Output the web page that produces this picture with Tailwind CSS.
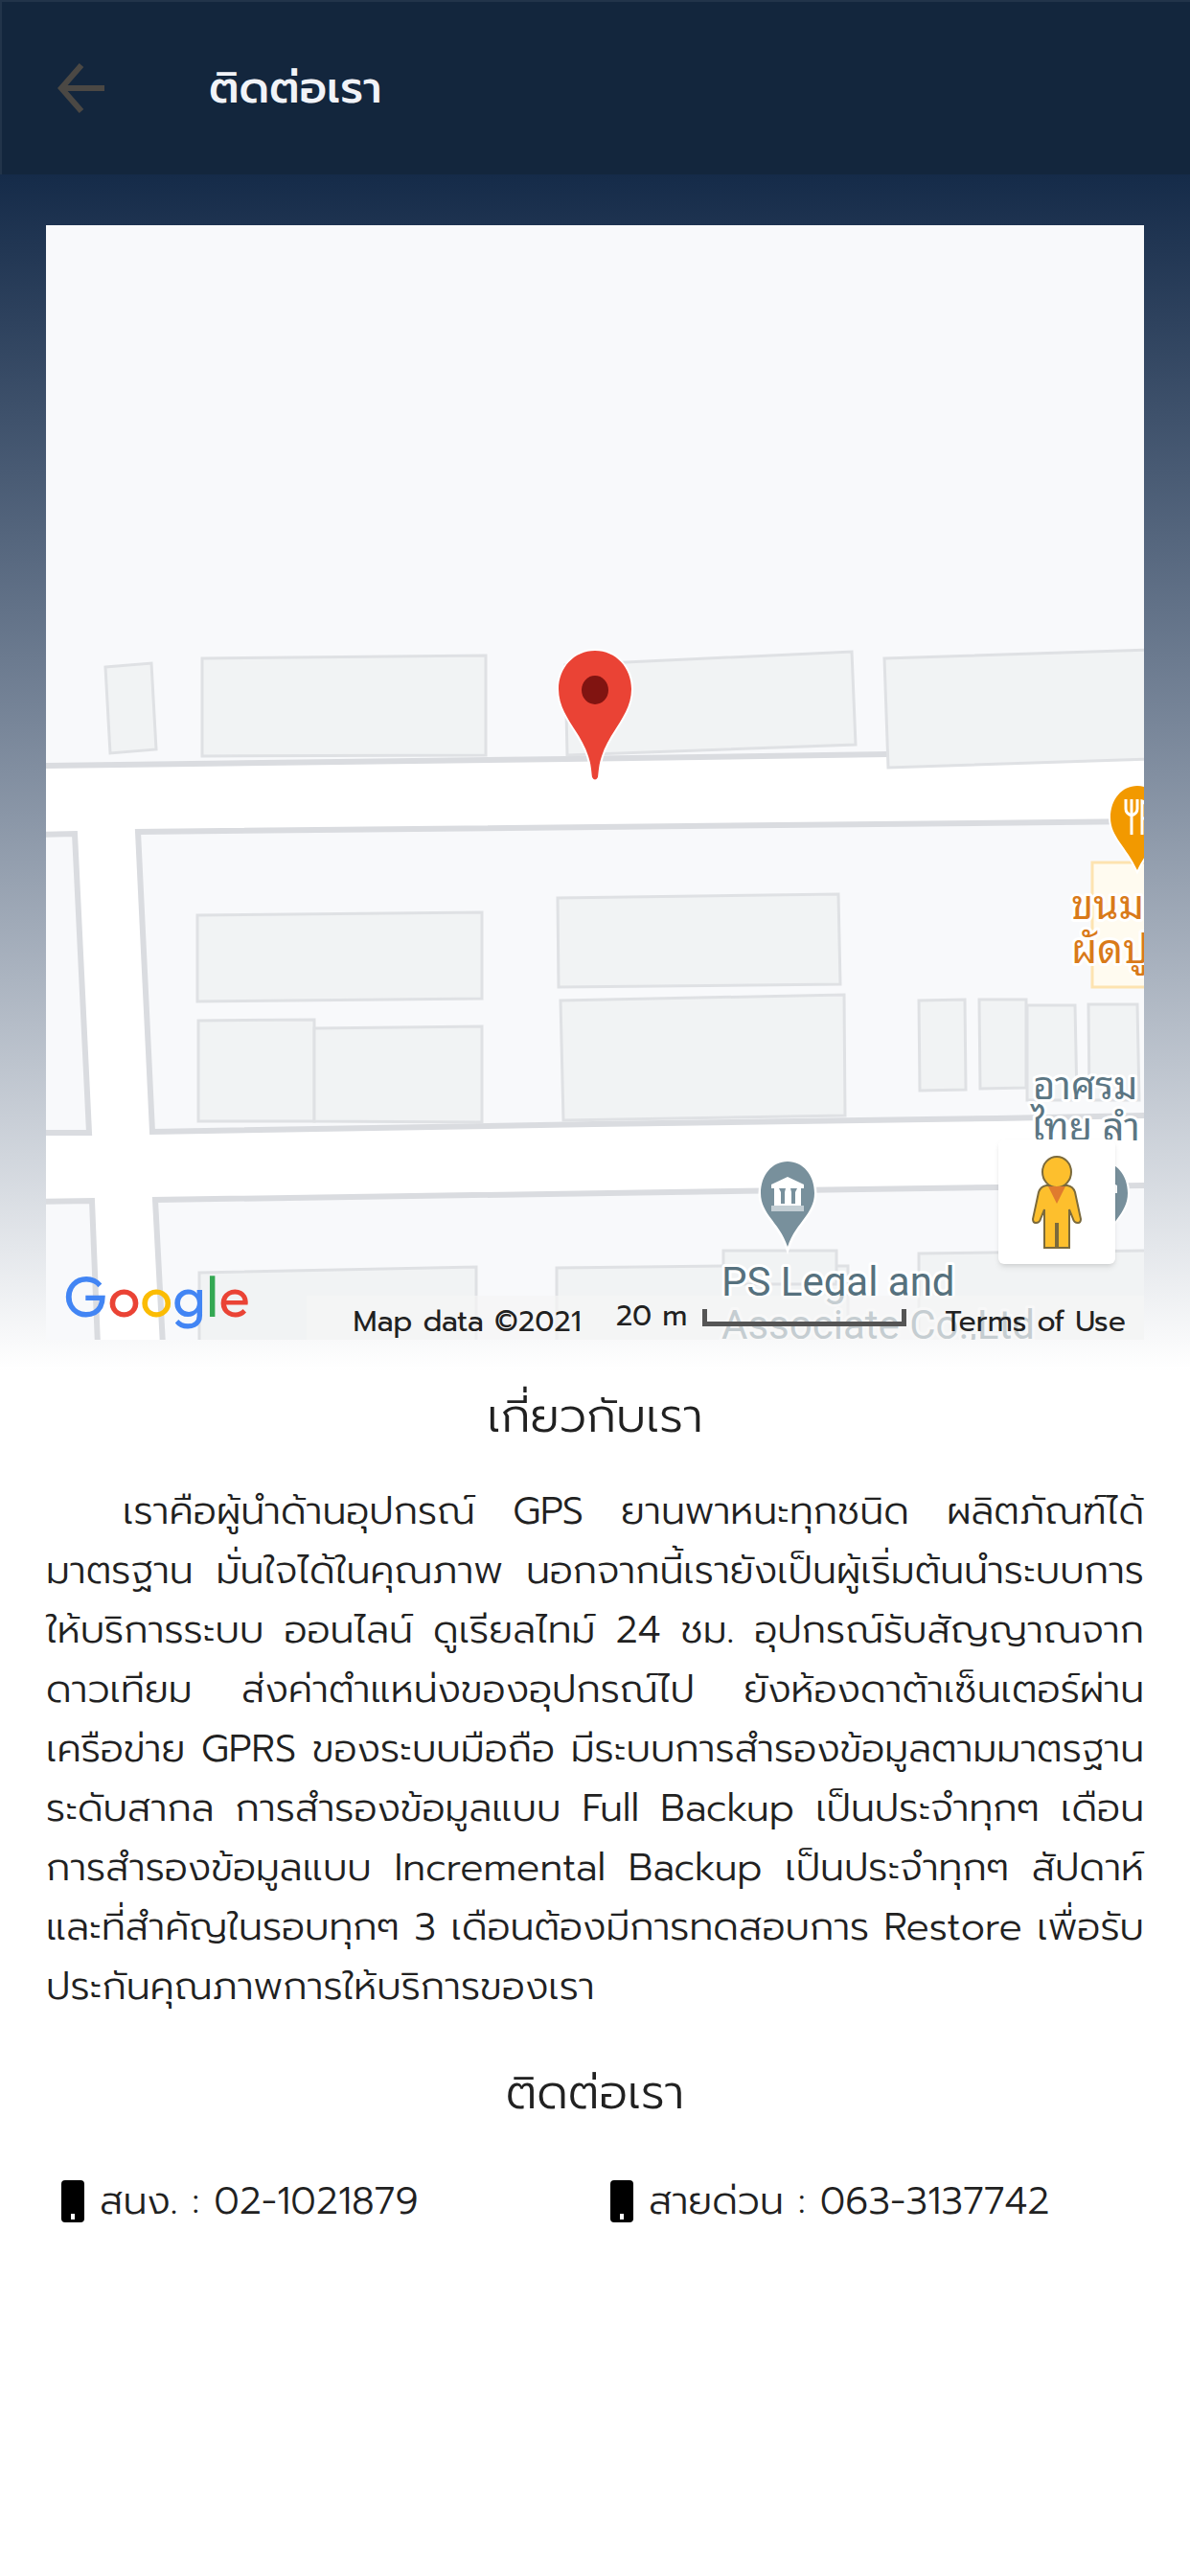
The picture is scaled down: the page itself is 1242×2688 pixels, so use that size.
<!DOCTYPE html>
<html lang="th">
  <head>
    <meta charset="UTF-8" />
    <meta name="viewport" content="width=device-width, initial-scale=1.0" />
    <title>ติดต่อเรา</title>
    <script src="https://cdn.jsdelivr.net/npm/@tailwindcss/browser@4"></script>
  </head>
  <body class="min-h-screen bg-white font-['Prompt','Noto_Sans',sans-serif] text-[#212121]">
    <header class="flex h-[182px] items-center border-t-2 border-l-2 border-[#22344a] bg-[#13263d] pl-14">
      <button type="button" aria-label="ย้อนกลับ" class="text-[#4b4844]">
        <svg class="h-14 w-14" viewBox="0 0 56 56" fill="none" stroke="currentColor" stroke-width="6">
          <path d="M27 4 6 28l21 24M6 28h45" />
        </svg>
      </button>
      <h1 class="ml-26 text-[46px] leading-[56px] font-medium text-[#f1f3f8]">ติดต่อเรา</h1>
    </header>

    <main>
      <section class="bg-linear-to-b from-[#152b49] to-white px-12 pt-[53px] pb-8">
        <div class="relative overflow-hidden bg-[#f8f9fb]">
          <svg class="block w-full" viewBox="48 235 1146 1163">
            <!-- roads -->
            <g fill="#fff" stroke="#dadce0" stroke-width="6">
              <path d="M40 799 591 792 927 787 1200 783V857L144 868 159 1181 620 1173 1040 1167 1200 1164V1237L1040 1239 162 1252 170 1404H102L96 1253 40 1254V1182H93L78 870 40 871Z" />
            </g>
            <!-- buildings -->
            <g fill="#f1f3f4" stroke="#dfe1e4" stroke-width="3">
              <path d="M110 696 158 692 163 782 115 786Z" />
              <path d="M211 687 507 684V788L211 789Z" />
              <path d="M590 694 889 680 893 777 592 788Z" />
              <path d="M923 687 1200 678V792L927 801Z" />
              <path d="M206 955 503 952V1042L206 1045Z" />
              <path d="M582 937 875 933 877 1027 583 1030Z" />
              <path d="M207 1065 328 1064V1170H207Z" />
              <path d="M328 1073 503 1071V1171L328 1170Z" />
              <path d="M585 1044 881 1038 882 1164 588 1169Z" />
              <path d="M959 1044 1007 1043 1008 1137 960 1138Z" />
              <path d="M1022 1043H1071V1135L1023 1136Z" />
              <path d="M1072 1049H1122L1124 1148H1072Z" />
              <path d="M1136 1048H1187L1189 1148H1137Z" />
              <path d="M208 1328 497 1322V1404H208Z" />
              <path d="M581 1323 755 1321H885V1404H581Z" />
              <path d="M755 1305H873V1340H755Z" />
              <path d="M959 1308 1200 1305V1404H959Z" />
            </g>
            <path d="M1140 900H1200V1030H1140Z" fill="#fffbf0" stroke="#fde3b0" stroke-width="3" />

            <!-- restaurant pin -->
            <g transform="translate(1187 820)">
              <path d="M0 0c-16 0-28 14-28 33 0 20 17 31 28 55 11-24 28-35 28-55C28 14 16 0 0 0Z" fill="#f29900" stroke="#fff" stroke-width="4" paint-order="stroke" />
              <path d="M-12 14v10q0 5 6 7 6-2 6-7V14M-6 14v37M5 51V16q6 2 6 18H5" fill="none" stroke="#fff" stroke-width="3" />
            </g>
            <!-- museum pins -->
            <g transform="translate(1149 1212)">
              <path d="M0 0c-16 0-28 14-28 33 0 22 20 31 28 56 8-25 28-34 28-56C28 14 16 0 0 0Z" fill="#78909c" stroke="#fff" stroke-width="4" paint-order="stroke" />
              <path d="M0 16 17 25v8H0Z" fill="#fff" />
            </g>
            <g transform="translate(822 1212)">
              <path d="M0 0c-16 0-28 14-28 33 0 22 20 31 28 56 8-25 28-34 28-56C28 14 16 0 0 0Z" fill="#78909c" stroke="#fff" stroke-width="5" paint-order="stroke" />
              <path d="M0 16 17 24v4h-3v18h-28V28h-3v-4Z" fill="#fff" />
              <path d="M-17 46h34v6h-34Z" fill="#c3ced4" />
              <path d="M-9 28h7l-1 4v12h-4V32ZM3 28h7l-2 4v12H4V32Z" fill="#78909c" />
            </g>

            <g stroke="#fff" stroke-width="6" stroke-linejoin="round" paint-order="stroke">
              <g class="font-['Noto_Sans_Thai_Looped','Noto_Sans',sans-serif] text-[42px]" fill="#d97a1a">
                <text x="1118" y="959">ขนม</text>
                <text x="1118" y="1005">ผัดปู</text>
              </g>
              <g class="font-['Noto_Sans_Thai_Looped','Noto_Sans',sans-serif] text-[40px]" fill="#5b7683">
                <text x="1078" y="1147">อาศรม</text>
                <text x="1076" y="1190">ไทย ลำ</text>
              </g>
              <g class="font-['Roboto',sans-serif] text-[42px]" fill="#56717e">
                <text x="753" y="1352">PS Legal and</text>
                <text x="753" y="1397">Associate Co.,Ltd</text>
              </g>
            </g>

            <!-- place marker -->
            <path d="M621 679c-22 0-38 18-38 40 0 27 23 44 31 70 3 9 3 14 4 22q3 5 6 0c1-8 1-13 4-22 8-26 31-43 31-70 0-22-16-40-38-40Z" fill="#ea4335" stroke="#fff" stroke-width="4" paint-order="stroke" />
            <ellipse cx="621" cy="720" rx="14" ry="15" fill="#811411" />
          </svg>

          <a href="#" aria-label="Google" class="absolute bottom-2 left-[18px] font-['Outfit','Prompt',sans-serif] text-[60px] leading-[76px]"
            ><span class="text-[#4285f4]">G</span><span class="text-[#ea4335]">o</span><span class="text-[#fbbc04]">o</span><span class="text-[#4285f4]">g</span><span class="text-[#34a853]">l</span><span class="text-[#ea4335]">e</span></a
          >

          <div class="absolute right-0 bottom-0 flex h-[46px] items-center bg-[#f5f5f5]/70 pr-[19px] pl-12 text-[30px] leading-[36px]">
            <span class="pt-2">Map data ©2021</span>
            <span class="ml-9 pb-1">20 m</span>
            <span class="ml-4 h-[18px] w-[213px] border-x-5 border-b-5 border-[#555]"></span>
            <a href="#" class="ml-10 pt-2">Terms of Use</a>
          </div>

          <button type="button" aria-label="Street View" class="absolute right-[30px] bottom-[79px] h-[130px] w-[122px] rounded-md bg-white shadow-md">
            <svg class="mx-auto h-[100px] w-[56px]" viewBox="0 0 56 100">
              <g fill="#fdbf2d" stroke="#7b6a3c" stroke-width="2">
                <path d="M17 33 39 33q6 1 8 7l6 28q0 4-3 4-4 0-5-4l-4-10v40H29V73h-2v25H15V58l-4 10q-1 4-5 4-3 0-3-4l6-28q2-6 8-7Z" />
                <ellipse cx="28" cy="19" rx="15" ry="16" />
              </g>
              <path d="M19 34h18L28 52Z" fill="#e07b2e" />
            </svg>
          </button>
        </div>
      </section>

      <section class="px-12 pt-4 font-light">
        <h2 class="text-center text-[49px] leading-[64px]">เกี่ยวกับเรา</h2>
        <p class="mt-9 indent-20 text-justify text-[40px] leading-[62px]">
          เราคือผู้นำด้านอุปกรณ์ GPS ยานพาหนะทุกชนิด ผลิตภัณฑ์ได้มาตรฐาน มั่นใจได้ในคุณภาพ นอกจากนี้เรายังเป็นผู้เริ่มต้นนำระบบการให้บริการระบบ ออนไลน์ ดูเรียลไทม์ 24 ชม. อุปกรณ์รับสัญญาณจากดาวเทียม ส่งค่าตำแหน่งของอุปกรณ์ไป ยังห้องดาต้าเซ็นเตอร์ผ่านเครือข่าย GPRS ของระบบมือถือ มีระบบการสำรองข้อมูลตามมาตรฐานระดับสากล การสำรองข้อมูลแบบ Full Backup เป็นประจำทุกๆ เดือน การสำรองข้อมูลแบบ Incremental Backup เป็นประจำทุกๆ สัปดาห์ และที่สำคัญในรอบทุกๆ 3 เดือนต้องมีการทดสอบการ Restore เพื่อรับประกันคุณภาพการให้บริการของเรา
        </p>

        <h2 class="mt-12 text-center text-[49px] leading-[64px]">ติดต่อเรา</h2>
        <div class="mt-[50px] grid grid-cols-2 text-[40px] leading-[62px]">
          <a href="tel:021021879" class="flex items-center gap-4 pl-4">
            <svg class="h-11 w-6" viewBox="0 0 24 44">
              <rect width="24" height="44" rx="4" fill="#000" />
              <rect x="10" y="35" width="4" height="6" fill="#fff" />
            </svg>
            สนง. : 02-1021879
          </a>
          <a href="tel:0633137742" class="flex items-center gap-4 pl-4">
            <svg class="h-11 w-6" viewBox="0 0 24 44">
              <rect width="24" height="44" rx="4" fill="#000" />
              <rect x="10" y="35" width="4" height="6" fill="#fff" />
            </svg>
            สายด่วน : 063-3137742
          </a>
        </div>
      </section>
    </main>
  </body>
</html>
